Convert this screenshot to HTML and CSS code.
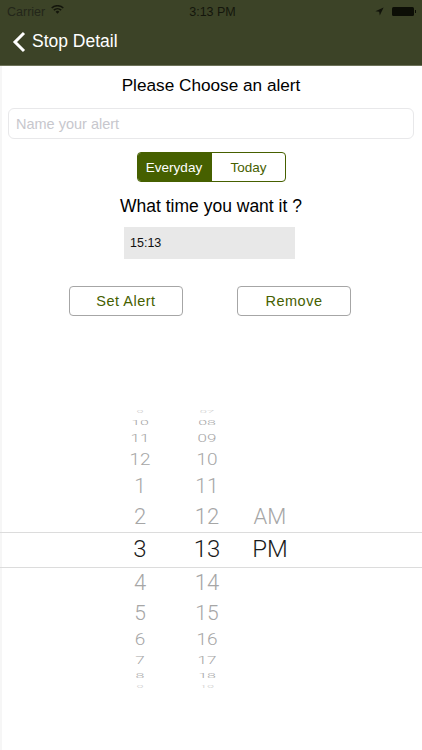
FILE: index.html
```html
<!DOCTYPE html>
<html lang="en">
<head>
<meta charset="utf-8">
<title>Stop Detail</title>
<link rel="stylesheet" href="styles.css">
</head>
<body>
<div class="app">
  <header class="top">
    <div class="status">
      <div class="status-left">
        <span>Carrier</span>
        <svg class="wifi" width="13" height="9" viewBox="0 0 13 9"><path d="M.7 3A8.4 8.4 0 0 1 12.3 3" fill="none" stroke="#14160c" stroke-width="1.5"/><path d="M2.8 5.1A5.4 5.4 0 0 1 10.2 5.1" fill="none" stroke="#14160c" stroke-width="1.5"/><path d="M4.6 6.7A2.8 2.8 0 0 1 8.4 6.7L6.5 8.8Z" fill="#14160c"/></svg>
      </div>
      <span class="clock">3:13 PM</span>
      <div class="status-right">
        <svg width="9" height="9" viewBox="0 0 9 9"><path d="M8.6.4 .4 4.2l3.8.6.6 3.8Z" fill="#11130a"/></svg>
        <span class="battery"></span>
        <span class="nub"></span>
      </div>
    </div>
    <nav class="nav">
      <svg class="chev" width="14" height="22" viewBox="0 0 14 22"><path d="M12 2 3 11l9 9" fill="none" stroke="#fff" stroke-width="3"/></svg>
      <span>Stop Detail</span>
    </nav>
  </header>
  <main class="content">
    <h1 class="title">Please Choose an alert</h1>
    <input class="name" type="text" placeholder="Name your alert">
    <div class="seg">
      <span class="seg-item on">Everyday</span>
      <span class="seg-item">Today</span>
    </div>
    <h2 class="sub">What time you want it ?</h2>
    <div class="time">15:13</div>
    <div class="actions">
      <button class="btn" type="button">Set Alert</button>
      <button class="btn" type="button">Remove</button>
    </div>
  </main>
  <section class="picker">
    <div class="col hours">
      <span class="it r1">9</span><span class="it r2">10</span><span class="it r3">11</span><span class="it r4">12</span><span class="it r5">1</span><span class="it r6">2</span><span class="it r7 cur">3</span><span class="it r6">4</span><span class="it r5">5</span><span class="it r4">6</span><span class="it r3">7</span><span class="it r2">8</span><span class="it r1">9</span>
    </div>
    <div class="col mins">
      <span class="it r1">07</span><span class="it r2">08</span><span class="it r3">09</span><span class="it r4">10</span><span class="it r5">11</span><span class="it r6">12</span><span class="it r7 cur">13</span><span class="it r6">14</span><span class="it r5">15</span><span class="it r4">16</span><span class="it r3">17</span><span class="it r2">18</span><span class="it r1">19</span>
    </div>
    <div class="col ampm">
      <span class="it r1"></span><span class="it r2"></span><span class="it r3"></span><span class="it r4"></span><span class="it r5"></span><span class="it r6">AM</span><span class="it r7 cur">PM</span>
    </div>
  </section>
</div>
</body>
</html>
```
FILE: styles.css
```css
* { box-sizing: border-box; }
html, body { margin: 0; padding: 0; }
body { width: 422px; height: 750px; overflow: hidden; background: #fff; font-family: "Liberation Sans", Arial, sans-serif; color: #000; }
.app { width: 422px; height: 750px; display: flex; flex-direction: column; border-left: 2px solid #f6f6f6; }
.top { background: #3c4327; margin-left: -2px; height: 66px; border-bottom: 1px solid #6d7259; }
.status { height: 20px; padding: 3px 6px 0 7px; display: flex; align-items: center; justify-content: space-between; font-size: 12.5px; color: #1b1d12; }
.status-left { display: flex; align-items: center; gap: 6px; width: 90px; color: #23261a; }
.wifi { margin-top: -4px; }
.clock { font-size: 12.5px; color: #14160c; margin-left: 2px; }
.status-right { display: flex; align-items: center; justify-content: flex-end; width: 90px; }
.status-right svg { margin-right: 8px; }
.battery { width: 22px; height: 9px; background: #0c0e06; border-radius: 1.5px; }
.nub { width: 1.5px; height: 3px; background: #0c0e06; margin-left: 1px; }
.nav { height: 45px; display: flex; align-items: center; padding-left: 12px; gap: 6px; color: #fff; font-size: 17.5px; padding-bottom: 2px; }
.chev { flex: none; }
.content { height: 326px; padding: 9px 8px 0 6px; display: flex; flex-direction: column; align-items: center; }
.title { margin: 0; font-size: 17.2px; font-weight: 400; line-height: 21px; }
.name { width: 406px; height: 31px; margin-top: 12px; border: 1px solid #e8e8ea; border-radius: 6px; padding: 0 7px; font: 14.5px "Liberation Sans", Arial, sans-serif; background: #fff; outline: none; }
.name::placeholder { color: #c7c7cd; opacity: 1; }
.seg { margin-top: 13px; width: 149px; height: 30px; display: flex; border: 1px solid #466000; border-radius: 4px; overflow: hidden; margin-left: 1px; }
.seg-item { flex: 1 1 0; display: flex; align-items: center; justify-content: center; font-size: 13.5px; color: #466000; }
.seg-item.on { flex: 0 0 74px; padding-right: 2px; background: #466000; color: #fff; }
.sub { margin: 14px 0 0; font-size: 17.5px; font-weight: 400; line-height: 21px; }
.time { width: 171px; height: 32px; margin: 10px 0 0 -3px; padding-left: 6px; background: #e8e8e8; display: flex; align-items: center; font-size: 12.5px; color: #111; }
.actions { margin: 27px 0 0 -2px; display: flex; gap: 54px; }
.btn { width: 114px; height: 30px; border: 1px solid #a6a6a6; border-radius: 4px; background: #fff; color: #466000; font: 14.5px "Liberation Sans", Arial, sans-serif; letter-spacing: .5px; padding: 0; }
.picker { height: 358px; margin-left: -2px; padding-top: 15px; display: flex; background: linear-gradient(transparent 0, transparent 140px, #dcdcdc 140px, #dcdcdc 141px, transparent 141px, transparent 175px, #dcdcdc 175px, #dcdcdc 176px, transparent 176px); }
.col { display: flex; flex-direction: column; align-items: center; font-family: "Roboto", "Liberation Sans", sans-serif; font-weight: 300; color: #a6a6a6; font-size: 23px; }
.hours { width: 60px; margin-left: 110px; }
.mins { width: 60px; margin-left: 7px; }
.ampm { width: 60px; margin-left: 3px; }
.it { display: flex; align-items: center; justify-content: center; white-space: nowrap; }
.cur { color: #1a1a1a; font-weight: 300; font-size: 24px; }
.r1 { height: 9px; transform: scaleY(.3); opacity: .55; font-size: 13px; }
.r2 { height: 13px; transform: scaleY(.5); font-size: 16px; }
.r3 { height: 18px; transform: scaleY(.68); font-size: 17px; }
.r4 { height: 24px; transform: scaleY(.84); font-size: 19px; }
.r5 { height: 29px; transform: scaleY(.94); font-size: 21px; }
.r6 { height: 32px; font-size: 22px; }
.r7 { height: 34px; }
```
